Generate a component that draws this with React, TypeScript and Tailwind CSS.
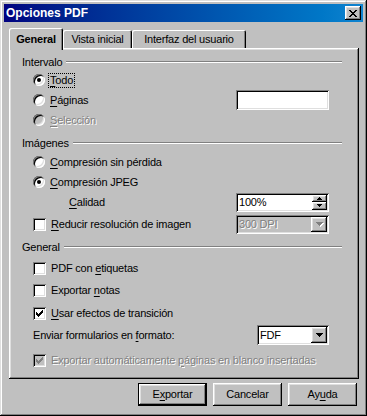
import React from "react";

const raised =
  "shadow-[inset_-1px_-1px_0_#000,inset_1px_1px_0_#fff,inset_-2px_-2px_0_#808080,inset_2px_2px_0_#dfdfdf]";
const sunken =
  "shadow-[inset_1px_1px_0_#808080,inset_-1px_-1px_0_#fff,inset_2px_2px_0_#000,inset_-2px_-2px_0_#dfdfdf]";
const disabledText = "text-[#808080] [text-shadow:1px_1px_0_#fff]";

function U({ children }: { children: React.ReactNode }) {
  return <span className="underline decoration-1 underline-offset-[2px]">{children}</span>;
}

function Radio({ checked = false, disabled = false }: { checked?: boolean; disabled?: boolean }) {
  return (
    <span
      className={`relative block w-[12px] h-[12px] rounded-full shrink-0 ${
        disabled ? "bg-[#c0c0c0]" : "bg-white"
      } shadow-[inset_1px_1px_0_#808080,inset_-1px_-1px_0_#fff,inset_2px_2px_0_#000,inset_-2px_-2px_0_#dfdfdf]`}
    >
      {checked && <span className="absolute left-[4px] top-[4px] w-[4px] h-[4px] rounded-full bg-black" />}
    </span>
  );
}

function Check({ checked = false, disabled = false }: { checked?: boolean; disabled?: boolean }) {
  return (
    <span className={`relative block w-[13px] h-[13px] shrink-0 ${disabled ? "bg-[#c0c0c0]" : "bg-white"} ${sunken}`}>
      {checked && (
        <svg className="absolute left-0 top-0" width="13" height="13" viewBox="0 0 13 13" shapeRendering="crispEdges">
          <path
            d="M3 5h1v1h1v1h1V6h1V5h1V4h1V3h1v3H9v1H8v1H7v1H6v1H5V9H4V8H3z"
            fill={disabled ? "#808080" : "#000"}
          />
        </svg>
      )}
    </span>
  );
}

function DownArrow({ color = "#000" }: { color?: string }) {
  return (
    <svg width="7" height="4" viewBox="0 0 7 4" shapeRendering="crispEdges">
      <path d="M0 0h7v1H6v1H5v1H4v1H3V3H2V2H1V1H0z" fill={color} />
    </svg>
  );
}

function GroupLabel({ label, className = "" }: { label: string; className?: string }) {
  return (
    <div className={`flex items-center h-[14px] ${className}`}>
      <span>{label}</span>
      <div className="flex-1 ml-[4px] h-[2px] border-t border-t-[#808080] border-b border-b-white" />
    </div>
  );
}

export default function App() {
  return (
    <div
      className={`w-[367px] h-[416px] bg-[#c0c0c0] p-[4px] flex flex-col text-[11px] tracking-[-0.2px] text-black font-['Liberation_Sans',Arial,sans-serif] shadow-[inset_-1px_-1px_0_#000,inset_1px_1px_0_#dfdfdf,inset_-2px_-2px_0_#808080,inset_2px_2px_0_#fff]`}
    >
      {/* Title bar */}
      <div className="h-[18px] flex items-center bg-gradient-to-r from-[#000080] to-[#1084d0] pl-[2px] pr-[2px]">
        <span className="text-white font-bold text-[12px] tracking-normal">Opciones PDF</span>
        <div className={`ml-auto w-[16px] h-[14px] bg-[#c0c0c0] ${raised} flex items-center justify-center`}>
          <svg width="8" height="7" viewBox="0 0 8 7" shapeRendering="crispEdges">
            <path
              d="M0 0h2v1h1v1h2V1h1V0h2v1H7v1H6v1H5v1h1v1h1v1h1v1H6V6H5V5H3v1H2v1H0V6h1V5h1V4h1V3H2V2H1V1H0z"
              fill="#000"
            />
          </svg>
        </div>
      </div>

      {/* Tabs */}
      <div className="mt-[6px] ml-[5px] h-[20px] flex items-end">
        <div className="relative z-10 w-[54px] h-[22px] mb-[-2px] bg-[#c0c0c0] rounded-t-[2px] shadow-[inset_1px_1px_0_#fff,inset_-1px_0_0_#000,inset_-2px_0_0_#808080] flex items-start justify-center pt-[3px] font-bold">
          General
        </div>
        <div className="w-[69px] h-[18px] bg-[#c0c0c0] rounded-t-[2px] shadow-[inset_1px_1px_0_#fff,inset_-1px_0_0_#000,inset_-2px_0_0_#808080] flex items-center justify-center">
          Vista inicial
        </div>
        <div className="w-[114px] h-[18px] bg-[#c0c0c0] rounded-t-[2px] shadow-[inset_1px_1px_0_#fff,inset_-1px_0_0_#000,inset_-2px_0_0_#808080] flex items-center justify-center">
          Interfaz del usuario
        </div>
      </div>

      {/* Panel */}
      <div
        className={`ml-[5px] w-[350px] h-[331px] bg-[#c0c0c0] pt-[2px] pl-[13px] pr-[17px] flex flex-col shadow-[inset_-1px_-1px_0_#000,inset_1px_1px_0_#fff,inset_-2px_-2px_0_#808080,inset_2px_2px_0_#dfdfdf]`}
      >
        <GroupLabel label="Intervalo" className="mt-[5px]" />
        <div className="flex items-center h-[20px] mt-[1px] pl-[11px] pr-[13px]">
          <Radio checked />
          <span className="ml-[3px] border border-dotted border-black px-[1px] leading-[13px]">
            <U>T</U>odo
          </span>
        </div>
        <div className="flex items-center h-[20px] pl-[11px] pr-[13px]">
          <Radio />
          <span className="ml-[5px]">
            <U>P</U>áginas
          </span>
          <div className={`ml-auto w-[93px] h-[20px] bg-white ${sunken}`} />
        </div>
        <div className="flex items-center h-[20px] pl-[11px] pr-[13px]">
          <Radio disabled />
          <span className={`ml-[5px] ${disabledText}`}>
            <U>S</U>elección
          </span>
        </div>

        <GroupLabel label="Imágenes" className="mt-[6px]" />
        <div className="flex items-center h-[20px] mt-[2px] pl-[11px] pr-[13px]">
          <Radio />
          <span className="ml-[5px]">
            <U>C</U>ompresión sin pérdida
          </span>
        </div>
        <div className="flex items-center h-[20px] pl-[11px] pr-[13px]">
          <Radio checked />
          <span className="ml-[5px]">
            <U>C</U>ompresión JPEG
          </span>
        </div>
        <div className="flex items-center h-[20px] pl-[47px] pr-[13px]">
          <span>
            <U>C</U>alidad
          </span>
          <div className={`ml-auto w-[93px] h-[19px] bg-white ${sunken} p-[2px] flex items-stretch`}>
            <span className="flex-1 pl-[1px] flex items-center">100%</span>
            <div className="w-[15px] flex flex-col">
              <div className={`flex-1 bg-[#c0c0c0] ${raised} flex items-center justify-center`}>
                <svg width="5" height="3" viewBox="0 0 5 3" shapeRendering="crispEdges">
                  <path d="M2 0h1v1h1v1h1v1H0V2h1V1h1z" fill="#000" />
                </svg>
              </div>
              <div className={`flex-1 bg-[#c0c0c0] ${raised} flex items-center justify-center`}>
                <svg width="5" height="3" viewBox="0 0 5 3" shapeRendering="crispEdges">
                  <path d="M0 0h5v1H4v1H3v1H2V2H1V1H0z" fill="#000" />
                </svg>
              </div>
            </div>
          </div>
        </div>
        <div className="flex items-center h-[20px] mt-[2px] pl-[11px] pr-[13px]">
          <Check />
          <span className="ml-[5px]">
            <U>R</U>educir resolución de imagen
          </span>
          <div className={`ml-auto w-[93px] h-[19px] bg-[#c0c0c0] ${sunken} p-[2px] flex items-stretch`}>
            <span className={`flex-1 pl-[1px] flex items-center ${disabledText}`}>300 DPI</span>
            <div className={`w-[16px] bg-[#c0c0c0] ${raised} flex items-center justify-center`}>
              <span className="[filter:drop-shadow(1px_1px_0_#fff)] flex">
                <DownArrow color="#808080" />
              </span>
            </div>
          </div>
        </div>

        <GroupLabel label="General" className="mt-[6px]" />
        <div className="flex items-center h-[20px] mt-[4px] pl-[11px] pr-[13px]">
          <Check />
          <span className="ml-[5px]">
            PDF con <U>e</U>tiquetas
          </span>
        </div>
        <div className="flex items-center h-[20px] mt-[2px] pl-[11px] pr-[13px]">
          <Check />
          <span className="ml-[5px]">
            Exportar <U>n</U>otas
          </span>
        </div>
        <div className="flex items-center h-[20px] mt-[3px] pl-[11px] pr-[13px]">
          <Check checked />
          <span className="ml-[5px]">
            <U>U</U>sar efectos de transición
          </span>
        </div>
        <div className="flex items-center h-[20px] mt-[2px] pl-[11px] pr-[13px]">
          <span>
            Enviar formularios en <U>f</U>ormato:
          </span>
          <div className={`ml-auto w-[72px] h-[20px] bg-white ${sunken} p-[2px] flex items-stretch`}>
            <span className="flex-1 pl-[1px] flex items-center">FDF</span>
            <div className={`w-[16px] bg-[#c0c0c0] ${raised} flex items-center justify-center`}>
              <DownArrow />
            </div>
          </div>
        </div>
        <div className="flex items-center h-[20px] mt-[5px] pl-[11px] pr-[13px]">
          <Check checked disabled />
          <span className={`ml-[5px] ${disabledText}`}>
            Exportar automáticamente <U>p</U>áginas en blanco insertadas
          </span>
        </div>
      </div>

      {/* Buttons */}
      <div className="mt-[4px] ml-[5px] w-[350px] pr-[2px] flex justify-end gap-[6px]">
        <button className={`w-[69px] h-[23px] bg-[#c0c0c0] border border-black ${raised} tracking-[-0.2px]`}>
          E<U>x</U>portar
        </button>
        <button className={`w-[69px] h-[23px] bg-[#c0c0c0] ${raised} tracking-[-0.2px]`}>Cancelar</button>
        <button className={`w-[69px] h-[23px] bg-[#c0c0c0] ${raised} tracking-[-0.2px]`}>
          Ay<U>u</U>da
        </button>
      </div>
    </div>
  );
}
